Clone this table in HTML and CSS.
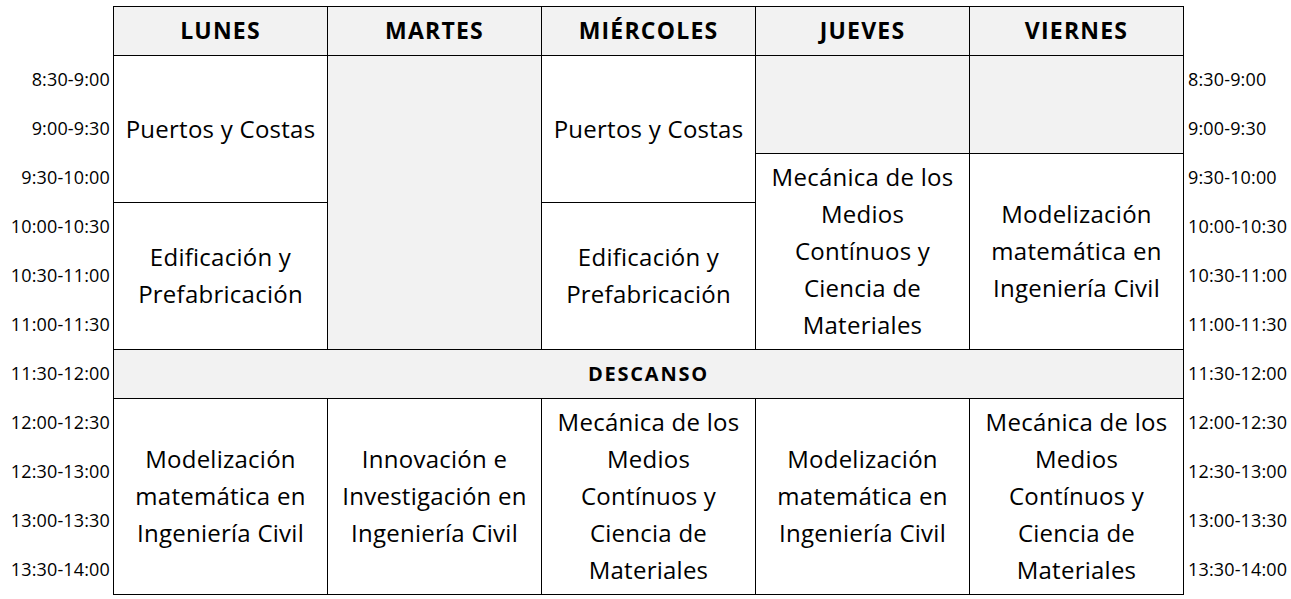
FILE: index.html
```html
<!DOCTYPE html>
<html lang="es">
<head>
<meta charset="utf-8">
<title>Horario</title>
<link rel="stylesheet" href="styles.css">
</head>
<body>
<div class="page">
  <div class="times times-left">
    <div class="time">8:30-9:00</div>
    <div class="time">9:00-9:30</div>
    <div class="time">9:30-10:00</div>
    <div class="time">10:00-10:30</div>
    <div class="time">10:30-11:00</div>
    <div class="time">11:00-11:30</div>
    <div class="time">11:30-12:00</div>
    <div class="time">12:00-12:30</div>
    <div class="time">12:30-13:00</div>
    <div class="time">13:00-13:30</div>
    <div class="time">13:30-14:00</div>
  </div>
  <div class="schedule">
    <div class="head c1">LUNES</div>
    <div class="head c2">MARTES</div>
    <div class="head c3">MIÉRCOLES</div>
    <div class="head c4">JUEVES</div>
    <div class="head c5">VIERNES</div>

    <div class="cell c1 r2-5">Puertos y Costas</div>
    <div class="cell c1 r5-8">Edificación y<br>Prefabricación</div>
    <div class="cell empty c2 r2-8"></div>
    <div class="cell c3 r2-5">Puertos y Costas</div>
    <div class="cell c3 r5-8">Edificación y<br>Prefabricación</div>
    <div class="cell empty c4 r2-4"></div>
    <div class="cell c4 r4-8">Mecánica de los<br>Medios<br>Contínuos y<br>Ciencia de<br>Materiales</div>
    <div class="cell empty c5 r2-4"></div>
    <div class="cell c5 r4-8">Modelización<br>matemática en<br>Ingeniería Civil</div>

    <div class="break">DESCANSO</div>

    <div class="cell c1 r9-13">Modelización<br>matemática en<br>Ingeniería Civil</div>
    <div class="cell c2 r9-13">Innovación e<br>Investigación en<br>Ingeniería Civil</div>
    <div class="cell c3 r9-13">Mecánica de los<br>Medios<br>Contínuos y<br>Ciencia de<br>Materiales</div>
    <div class="cell c4 r9-13">Modelización<br>matemática en<br>Ingeniería Civil</div>
    <div class="cell c5 r9-13">Mecánica de los<br>Medios<br>Contínuos y<br>Ciencia de<br>Materiales</div>
  </div>
  <div class="times times-right">
    <div class="time">8:30-9:00</div>
    <div class="time">9:00-9:30</div>
    <div class="time">9:30-10:00</div>
    <div class="time">10:00-10:30</div>
    <div class="time">10:30-11:00</div>
    <div class="time">11:00-11:30</div>
    <div class="time">11:30-12:00</div>
    <div class="time">12:00-12:30</div>
    <div class="time">12:30-13:00</div>
    <div class="time">13:00-13:30</div>
    <div class="time">13:30-14:00</div>
  </div>
</div>
</body>
</html>
```
FILE: styles.css
```css
* { box-sizing: border-box; }
html, body { margin: 0; padding: 0; background: #fff; }
body {
  font-family: "Open Sans", "Lato", sans-serif;
  color: #000;
}
.page {
  display: flex;
  padding-top: 6px;
}
.times {
  display: flex;
  flex-direction: column;
  padding-top: 49px;
}
.times-left { width: 113px; align-items: flex-end; padding-right: 3px; }
.times-right { flex: 1; align-items: flex-start; padding-left: 4px; }
.time {
  height: 49px;
  line-height: 48px;
  font-size: 18px;
  letter-spacing: 0.15px;
  white-space: nowrap;
}
.schedule {
  display: grid;
  grid-template-columns: repeat(5, 213px);
  grid-template-rows: 48px repeat(11, 48px);
  gap: 1px;
  padding: 1px;
  background: #000;
}
.head {
  grid-row: 1;
  background: #f2f2f2;
  font-weight: 700;
  font-size: 23px;
  letter-spacing: 1.2px;
  padding-bottom: 2px;
  display: flex;
  align-items: center;
  justify-content: center;
}
.cell {
  background: #fff;
  display: flex;
  align-items: center;
  justify-content: center;
  text-align: center;
  font-size: 24px;
  letter-spacing: 0.25px;
  line-height: 37px;
  padding-bottom: 2px;
}
.cell.empty { background: #f2f2f2; }
.break {
  grid-row: 8;
  grid-column: 1 / 6;
  background: #f2f2f2;
  font-weight: 700;
  font-size: 20px;
  letter-spacing: 1.8px;
  padding-bottom: 2px;
  display: flex;
  align-items: center;
  justify-content: center;
}
.c1 { grid-column: 1; }
.c2 { grid-column: 2; }
.c3 { grid-column: 3; }
.c4 { grid-column: 4; }
.c5 { grid-column: 5; }
.r2-4 { grid-row: 2 / 4; }
.r2-5 { grid-row: 2 / 5; }
.r2-8 { grid-row: 2 / 8; }
.r4-8 { grid-row: 4 / 8; }
.r5-8 { grid-row: 5 / 8; }
.r9-13 { grid-row: 9 / 13; }
```
